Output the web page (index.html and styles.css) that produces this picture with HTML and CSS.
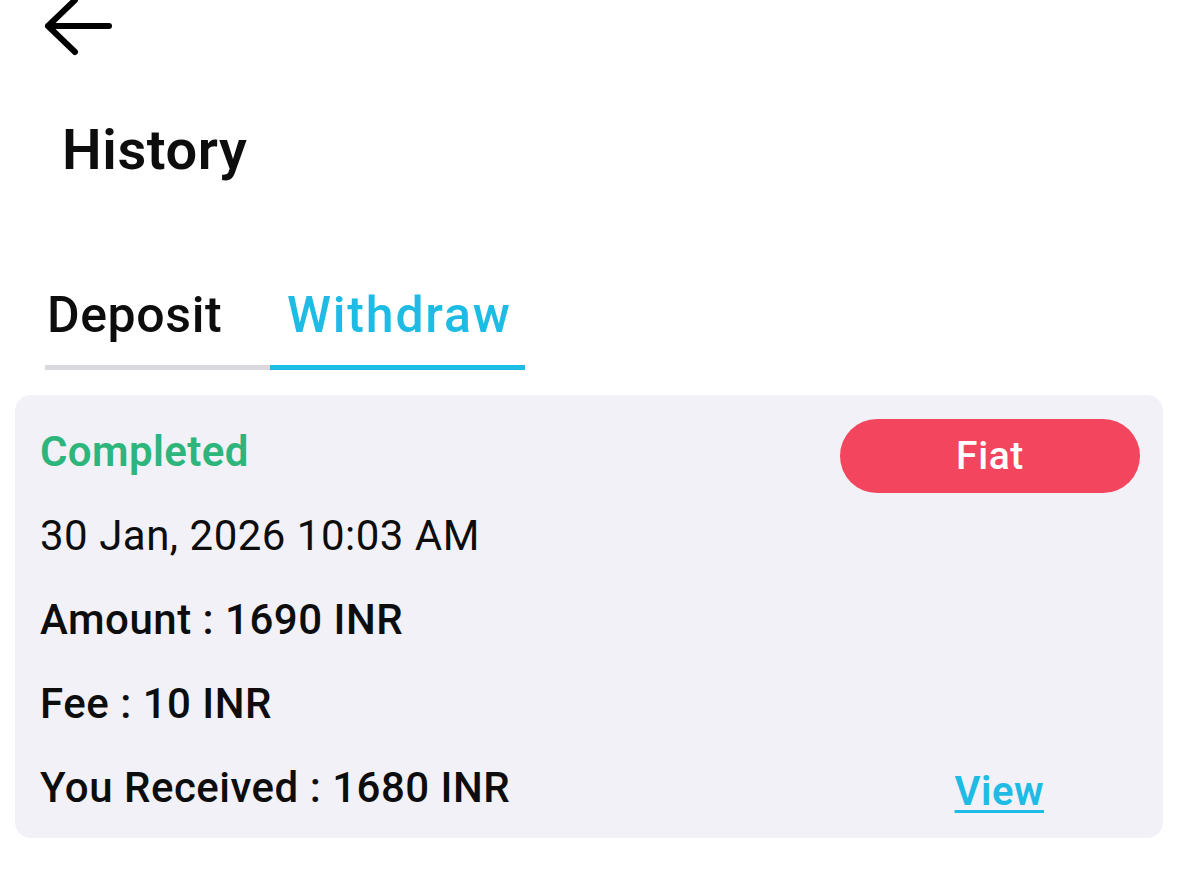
FILE: index.html
```html
<!DOCTYPE html>
<html>
<head>
	<title>History</title>
	<link rel="stylesheet" href="styles.css">
</head>
<body>

	<div class="topbar">
		<svg class="back" width="70" height="60" viewBox="0 0 70 60">
			<path d="M66 27 H5 M32 1 L5 27 L32 53" fill="none" stroke="#000" stroke-width="6" stroke-linecap="round" stroke-linejoin="round"/>
		</svg>
	</div>

	<h1 class="title">History</h1>

	<!-- tabs -->
	<div class="tabs">
		<div class="tab">Deposit</div>
		<div class="tab active">Withdraw</div>
	</div>

	<div class="card">
		<div class="row-top">
			<div class="status">Completed</div>
			<div class="pill">Fiat</div>
		</div>
		<div class="line date">30 Jan, 2026 10:03 AM</div>
		<div class="line">Amount : 1690 INR</div>
		<div class="line">Fee : 10 INR</div>
		<div class="row-last">
			<div class="line">You Received : 1680 INR</div>
			<a class="view" href="#">View</a>
		</div>
	</div>

</body>
</html>
```

FILE: styles.css
```css
* {
    box-sizing: border-box;
}

body {
    margin: 0;
    background: #fff;
    font-family: Roboto, "Noto Sans", sans-serif;
    color: #0d0d0d;
}

.topbar {
    height: 60px;
    padding-left: 43px;
    margin-top: -1px;
}

.back {
    display: block;
}

.title {
    margin: 0;
    padding: 58px 0 0 62px;
    font-size: 56px;
    font-weight: 600;
    line-height: 66px;
    letter-spacing: 0.6px;
}

.tabs {
    display: flex;
    margin: 104px 0 0 45px;
}

.tab {
    font-size: 50px;
    font-weight: 500;
    line-height: 56px;
    letter-spacing: 0.6px;
    padding: 0 0 22px 2px;
    width: 225px;
    border-bottom: 5px solid #d9d9de;
}

.tab.active {
    color: #1ebbe5;
    border-bottom-color: #1ebbe5;
    width: 255px;
    padding-left: 17px;
    letter-spacing: 1.8px;
}

.card {
    margin: 25px 16px 0 15px;
    background: #f1f1f7;
    border-radius: 16px;
    padding: 15px 23px 8px 25px;
}

.row-top {
    display: flex;
    justify-content: space-between;
    align-items: flex-start;
}

.status {
    color: #2db57b;
    font-size: 42px;
    font-weight: 600;
    line-height: 84px;
    letter-spacing: 0.4px;
}

.pill {
    width: 300px;
    height: 74px;
    margin-top: 9px;
    background: #f4455f;
    color: #fff;
    border-radius: 37px;
    font-size: 39px;
    font-weight: 500;
    letter-spacing: 0.6px;
    display: flex;
    align-items: center;
    justify-content: center;
}

.line {
    font-size: 42px;
    font-weight: 500;
    line-height: 84px;
    letter-spacing: 0.5px;
}

.date {
    font-weight: 400;
}

.row-last {
    display: flex;
    justify-content: space-between;
    align-items: baseline;
}

.view {
    color: #1ebbe5;
    font-size: 40px;
    font-weight: 600;
    letter-spacing: 0.5px;
    margin-right: 96px;
    position: relative;
    top: 3px;
    text-decoration-thickness: 3px;
    text-underline-offset: 5px;
}
```
